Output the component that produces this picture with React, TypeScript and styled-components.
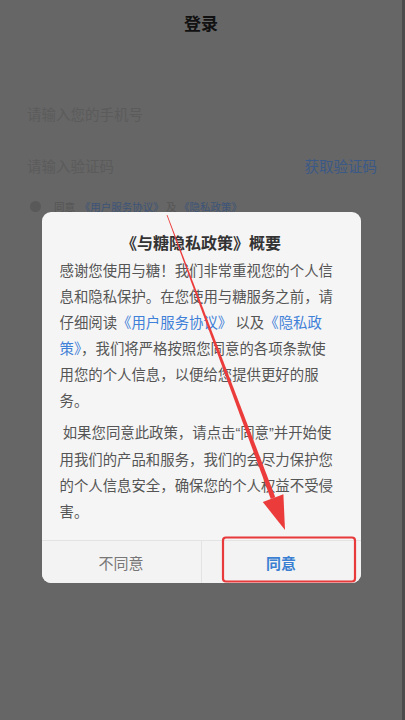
import React from 'react';
import styled, { createGlobalStyle } from 'styled-components';

const GlobalStyle = createGlobalStyle`
    html, body {
        margin: 0;
        padding: 0;
        background: #666666;
    }
    body {
        font-family: "Noto Sans CJK SC", "Noto Sans", "Liberation Sans", sans-serif;
    }
    * {
        box-sizing: border-box;
    }
`;

const Page = styled.div`
    position: relative;
    width: 405px;
    height: 720px;
    overflow: hidden;
    background: #666666;
    border-right: 3px solid #4c4c4c;
`;

const Header = styled.div`
    height: 44px;
    display: flex;
    align-items: center;
    justify-content: center;
    font-size: 17px;
    font-weight: bold;
    color: #111111;
`;

const Form = styled.div`
    display: flex;
    flex-direction: column;
    padding: 0 25px 0 27px;
    margin-top: 43px;
`;

const Field = styled.div`
    height: 52px;
    display: flex;
    align-items: center;
    justify-content: space-between;
`;

const Placeholder = styled.span`
    font-size: 14.5px;
    color: #5b5b5b;
`;

const CodeLink = styled.span`
    font-size: 14.5px;
    color: #3b5987;
`;

const Agreement = styled.div`
    height: 30px;
    display: flex;
    align-items: center;
    gap: 13px;
    margin-left: 3px;
    font-size: 10.5px;
    color: #555555;
`;

const Radio = styled.span`
    width: 11px;
    height: 11px;
    border-radius: 50%;
    background: #595959;
`;

const DimLink = styled.span`
    color: #3d5478;
`;

const Overlay = styled.div`
    position: absolute;
    inset: 0;
    display: flex;
    justify-content: center;
    align-items: flex-start;
    padding-top: 212px;
`;

const Dialog = styled.div`
    width: 319px;
    background: #f5f5f5;
    border-radius: 9px;
    overflow: hidden;
    display: flex;
    flex-direction: column;
`;

const Title = styled.div`
    padding-top: 18px;
    line-height: 24px;
    text-align: center;
    font-size: 16px;
    font-weight: bold;
    color: #333333;
`;

const Body = styled.div`
    padding: 3px 10px 16px 18px;
    display: flex;
    flex-direction: column;
    gap: 6px;
`;

const Paragraph = styled.div`
    font-size: 14.4px;
    line-height: 26px;
    color: #555555;
    white-space: nowrap;
`;

const Line = styled.div``;

const Link = styled.span`
    color: #3f80d8;
`;

const Quote = styled.span`
    font-family: "Liberation Sans", sans-serif;
`;

const Buttons = styled.div`
    display: flex;
    height: 43px;
    border-top: 1px solid #e3e3e3;
    background: #f3f3f3;
`;

const Button = styled.div<{ $primary?: boolean }>`
    flex: 1;
    display: flex;
    align-items: center;
    justify-content: center;
    font-size: 15px;
    color: ${(p) => (p.$primary ? '#3b7fd2' : '#777777')};
    font-weight: ${(p) => (p.$primary ? 'bold' : 'normal')};
    & + & {
        border-left: 1px solid #e3e3e3;
    }
`;

const Annotation = styled.svg`
    position: absolute;
    inset: 0;
    pointer-events: none;
`;

const App: React.FunctionComponent = () => {
    const start = [167, 215];
    const tip = [285, 530];
    const dx = tip[0] - start[0];
    const dy = tip[1] - start[1];
    const len = Math.sqrt(dx * dx + dy * dy);
    const ux = dx / len;
    const uy = dy / len;
    const px = uy;
    const py = -ux;
    const head = 34;
    const base = [tip[0] - ux * head, tip[1] - uy * head];
    const pt = (x: number, y: number) => `${x.toFixed(1)},${y.toFixed(1)}`;
    const shaft = [
        pt(start[0] + px * 0.4, start[1] + py * 0.4),
        pt(base[0] + px * 2.4, base[1] + py * 2.4),
        pt(base[0] - px * 2.4, base[1] - py * 2.4),
        pt(start[0] - px * 0.4, start[1] - py * 0.4)
    ].join(' ');
    const arrowHead = [
        pt(tip[0], tip[1]),
        pt(base[0] + px * 11, base[1] + py * 11),
        pt(base[0] - px * 11, base[1] - py * 11)
    ].join(' ');

    return (
        <>
            <GlobalStyle />
            <Page>
                <Header>登录</Header>
                <Form>
                    <Field>
                        <Placeholder>请输入您的手机号</Placeholder>
                    </Field>
                    <Field>
                        <Placeholder>请输入验证码</Placeholder>
                        <CodeLink>获取验证码</CodeLink>
                    </Field>
                    <Agreement>
                        <Radio />
                        <span>
                            同意&nbsp;&nbsp;<DimLink>《用户服务协议》</DimLink> 及 <DimLink>《隐私政策》</DimLink>
                        </span>
                    </Agreement>
                </Form>
                <Overlay>
                    <Dialog>
                        <Title>《与糖隐私政策》概要</Title>
                        <Body>
                            <Paragraph>
                                <Line>感谢您使用与糖！我们非常重视您的个人信</Line>
                                <Line>息和隐私保护。在您使用与糖服务之前，请</Line>
                                <Line>
                                    仔细阅读<Link>《用户服务协议》</Link> 以及<Link>《隐私政</Link>
                                </Line>
                                <Line>
                                    <Link>策》</Link>，我们将严格按照您同意的各项条款使
                                </Line>
                                <Line>用您的个人信息，以便给您提供更好的服</Line>
                                <Line>务。</Line>
                            </Paragraph>
                            <Paragraph>
                                <Line>
                                    &nbsp;如果您同意此政策，请点击<Quote>“</Quote>同意<Quote>”</Quote>并开始使
                                </Line>
                                <Line>用我们的产品和服务，我们的会尽力保护您</Line>
                                <Line>的个人信息安全，确保您的个人权益不受侵</Line>
                                <Line>害。</Line>
                            </Paragraph>
                        </Body>
                        <Buttons>
                            <Button>不同意</Button>
                            <Button $primary>同意</Button>
                        </Buttons>
                    </Dialog>
                </Overlay>
                <Annotation width="405" height="720" viewBox="0 0 405 720">
                    <polygon points={shaft} fill="#ec3b3b" />
                    <polygon points={arrowHead} fill="#ec3b3b" />
                    <rect
                        x="223"
                        y="537.5"
                        width="132"
                        height="44"
                        rx="3"
                        fill="none"
                        stroke="#e8393b"
                        strokeWidth="2.2"
                    />
                </Annotation>
            </Page>
        </>
    );
};

export default App;
